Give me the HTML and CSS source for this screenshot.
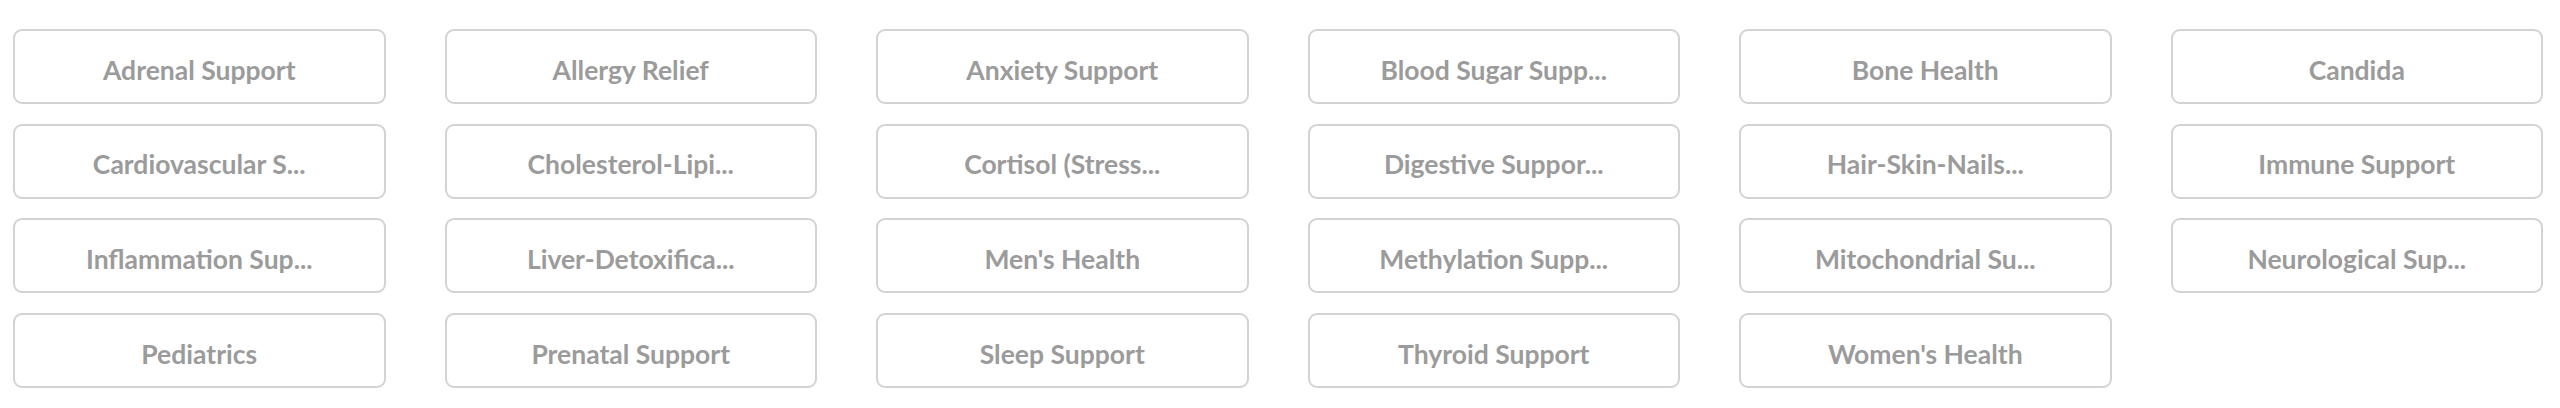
FILE: index.html
```html
<!DOCTYPE html>
<html lang="en">
<head>
    <meta charset="UTF-8">
    <meta name="viewport" content="width=device-width, initial-scale=1.0">
    <title>Health Categories</title>
    <link rel="stylesheet" href="styles.css">
</head>
<body>
    <div class="category-grid">
        <button class="category">Adrenal Support</button>
        <button class="category">Allergy Relief</button>
        <button class="category">Anxiety Support</button>
        <button class="category">Blood Sugar Supp...</button>
        <button class="category">Bone Health</button>
        <button class="category">Candida</button>
        <button class="category">Cardiovascular S...</button>
        <button class="category">Cholesterol-Lipi...</button>
        <button class="category">Cortisol (Stress...</button>
        <button class="category">Digestive Suppor...</button>
        <button class="category">Hair-Skin-Nails...</button>
        <button class="category">Immune Support</button>
        <button class="category">Inflammation Sup...</button>
        <button class="category">Liver-Detoxifica...</button>
        <button class="category">Men's Health</button>
        <button class="category">Methylation Supp...</button>
        <button class="category">Mitochondrial Su...</button>
        <button class="category">Neurological Sup...</button>
        <button class="category">Pediatrics</button>
        <button class="category">Prenatal Support</button>
        <button class="category">Sleep Support</button>
        <button class="category">Thyroid Support</button>
        <button class="category">Women's Health</button>
    </div>
</body>
</html>
```

FILE: styles.css
```css
body {
    margin: 0;
    background-color: #fff;
    font-family: Lato, "Noto Sans", sans-serif;
}
.category-grid {
    display: grid;
    grid-template-columns: repeat(6, 1fr);
    column-gap: 59px;
    row-gap: 19.7px;
    padding: 29px 17px 0 13px;
}
.category {
    height: 75px;
    padding: 6px 10px 0;
    border: 2px solid #d3d3d3;
    border-radius: 9px;
    background-color: #fff;
    color: #9b9b9b;
    font-family: Lato, "Noto Sans", sans-serif;
    font-size: 26.5px;
    font-weight: 700;
    white-space: nowrap;
    cursor: pointer;
}
.category:hover {
    border-color: #bbb;
}
```
